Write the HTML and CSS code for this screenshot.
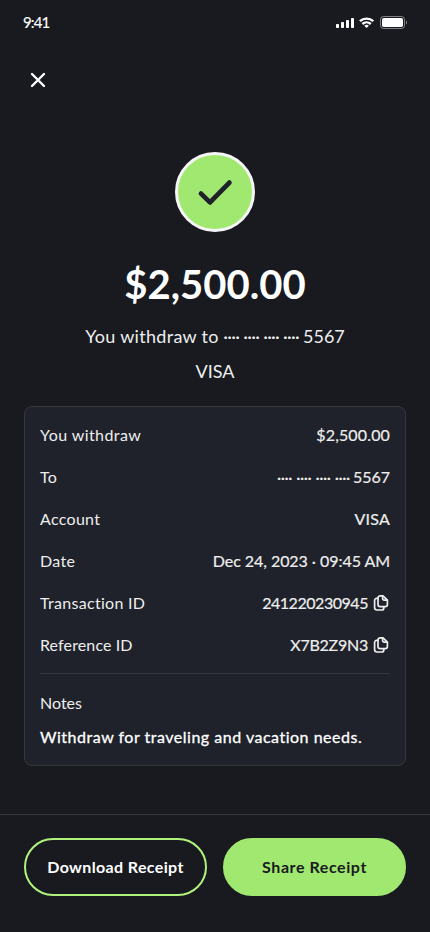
FILE: index.html
```html
<!DOCTYPE html>
<html lang="en">
<head>
<meta charset="utf-8">
<meta name="viewport" content="width=device-width, initial-scale=1">
<title>Withdraw receipt</title>
<link rel="stylesheet" href="styles.css">
</head>
<body>
<div class="screen">
  <header class="status">
    <span class="time">9:41</span>
    <svg class="status-icons" width="72" height="14" viewBox="0 0 72 14" fill="#fff">
      <rect x="1" y="9" width="3" height="4" rx=".8"/>
      <rect x="6" y="7" width="3" height="6" rx=".8"/>
      <rect x="11" y="5" width="3" height="8" rx=".8"/>
      <rect x="16" y="3" width="3" height="10" rx=".8"/>
      <g fill="none" stroke="#fff" stroke-width="2.4">
        <path d="M24.900 6.200a9.900 9.900 0 0 1 13.400 0"/>
        <path d="M27.400 9a6.200 6.200 0 0 1 8.400 0"/>
      </g>
      <path d="M31.600 13l-2.300-2.200a3.500 3.500 0 0 1 4.600 0z"/>
      <rect x="45.500" y="1.500" width="24" height="12" rx="3" fill="none" stroke="#fff" stroke-opacity=".45"/>
      <rect x="47" y="3" width="21" height="9" rx="1.700"/>
      <path d="M71 5.500v4q1-.6 1-2t-1-2z" opacity=".5"/>
    </svg>
  </header>
  <nav class="toolbar">
    <svg width="28" height="28" viewBox="0 0 28 28" fill="none" stroke="#fff" stroke-width="2.400" stroke-linecap="round"><path d="M8 8l12 12M20 8L8 20"/></svg>
  </nav>
  <main>
    <div class="badge">
      <svg width="40" height="32" viewBox="0 0 40 32" fill="none" stroke="#1f222a" stroke-width="4.800" stroke-linecap="round" stroke-linejoin="round"><path d="M6 17.600l9 8.800L34.400 6.600"/></svg>
    </div>
    <h1 class="amount">$2,500.00</h1>
    <p class="summary"><span class="s-text">You withdraw to</span><span class="mask"><i>····</i><i>····</i><i>····</i><i>····</i></span><span>5567</span></p>
    <p class="summary">VISA</p>
    <section class="card">
      <div class="row"><span class="l-withdraw">You withdraw</span><b class="v-amount">$2,500.00</b></div>
      <div class="row"><span class="l-short">To</span><b><span class="mask"><i>····</i><i>····</i><i>····</i><i>····</i></span><span>5567</span></b></div>
      <div class="row"><span class="l-short">Account</span><b class="v-visa">VISA</b></div>
      <div class="row"><span class="l-short">Date</span><b class="v-date">Dec 24, 2023 · 09:45 AM</b></div>
      <div class="row"><span class="l-short">Transaction ID</span><b><span class="v-trans">241220230945</span>
        <svg class="copy" width="16" height="18" viewBox="0 0 16 18"><path d="M9.300 1.800H7.200a2.200 2.200 0 0 0-2.200 2.200v6.400a2.200 2.200 0 0 0 2.200 2.200h5a2.200 2.200 0 0 0 2.200-2.200V6.200L10 1.800z"/><path d="M9.600 2v2.600a1.600 1.600 0 0 0 1.600 1.600h3"/><path d="M4.800 4.400H3.600a2 2 0 0 0-2 2v7.200a2.400 2.400 0 0 0 2.400 2.400h4.800a2 2 0 0 0 2-2v-1.200"/></svg></b></div>
      <div class="row"><span class="l-ref">Reference ID</span><b><span class="v-ref">X7B2Z9N3</span>
        <svg class="copy" width="16" height="18" viewBox="0 0 16 18"><path d="M9.300 1.800H7.200a2.200 2.200 0 0 0-2.200 2.200v6.400a2.200 2.200 0 0 0 2.200 2.200h5a2.200 2.200 0 0 0 2.200-2.200V6.200L10 1.800z"/><path d="M9.600 2v2.600a1.600 1.600 0 0 0 1.600 1.600h3"/><path d="M4.800 4.400H3.600a2 2 0 0 0-2 2v7.200a2.400 2.400 0 0 0 2.400 2.400h4.800a2 2 0 0 0 2-2v-1.200"/></svg></b></div>
      <div class="notes">
        <p>Notes</p>
        <p class="note-text">Withdraw for traveling and vacation needs.</p>
      </div>
    </section>
  </main>
  <footer class="actions">
    <button class="btn outline">Download Receipt</button>
    <button class="btn solid">Share Receipt</button>
  </footer>
</div>
</body>
</html>
```
FILE: styles.css
```css
* { box-sizing: border-box; margin: 0; padding: 0; }
body { background: #181a20; color: #fff; font-family: Lato, "Liberation Sans", sans-serif; font-variant-ligatures: none; }
.screen { width: 430px; height: 932px; display: flex; flex-direction: column; overflow: hidden; white-space: nowrap; }
.status { height: 44px; padding: 0 23px; display: flex; align-items: center; justify-content: space-between; }
.time { font-size: 15px; letter-spacing: -.85px; -webkit-text-stroke: .15px; padding-bottom: 1px; }
.status-icons { display: block; }
.toolbar { height: 72px; padding: 22px 24px; }
.toolbar svg { display: block; }
main { padding: 36px 24px 0; flex: 1; display: flex; flex-direction: column; align-items: center; }
.badge { width: 80px; height: 80px; border-radius: 50%; border: 3px solid #f5f5f5; background: #a1e871; display: flex; align-items: center; justify-content: center; }
.amount { margin-top: 28px; font-size: 40px; line-height: 48px; font-weight: 700; }
.summary { font-size: 18px; line-height: 35px; color: #eee; display: flex; }
.amount + .summary { margin-top: 11px; }
.s-text { letter-spacing: .3px; }
.mask { display: inline-flex; }
.mask i { font-style: normal; }
.summary .mask { margin: 0 4px 0 4.500px; gap: 4px; letter-spacing: -.7px; }
.row .mask { margin-right: 3px; gap: 4px; letter-spacing: -.35px; }
.card { width: 100%; height: 360px; margin-top: 17px; padding: 6px 15px; background: #1f222a; border: 1px solid #35383f; border-radius: 8px; }
.row { height: 42px; display: flex; align-items: center; justify-content: space-between; font-size: 16px; color: #eee; }
.row b { font-weight: 400; -webkit-text-stroke: .2px; display: flex; align-items: center; }
.l-withdraw { letter-spacing: .42px; }
.l-short { letter-spacing: .3px; }
.l-ref { letter-spacing: .12px; }
.v-amount { letter-spacing: .15px; }
.v-visa { letter-spacing: .2px; }
.v-date { letter-spacing: -.05px; }
.v-trans { letter-spacing: -.46px; }
.v-ref { letter-spacing: -.25px; }
.copy { display: block; margin: 1px 1px -1px 5px; fill: none; stroke: #eee; stroke-width: 1.700; stroke-linecap: round; stroke-linejoin: round; }
.notes { border-top: 1px solid #35383f; margin-top: 8px; padding-top: 12px; font-size: 16px; line-height: 34px; color: #eee; }
.note-text { -webkit-text-stroke: .3px; letter-spacing: .51px; color: #fff; }
.actions { height: 118px; border-top: 1px solid #35383f; padding: 23px 24px; display: grid; grid-template-columns: 1fr 1fr; gap: 16px; }
.btn { height: 58px; padding-bottom: 1px; border-radius: 29px; border: 2px solid #b0f37c; background: none; color: #fff; font: 700 16px Lato, sans-serif; font-variant-ligatures: none; letter-spacing: .37px; }
.solid { border-color: #a1e871; background: #a1e871; color: #181a20; letter-spacing: .58px; }
```
